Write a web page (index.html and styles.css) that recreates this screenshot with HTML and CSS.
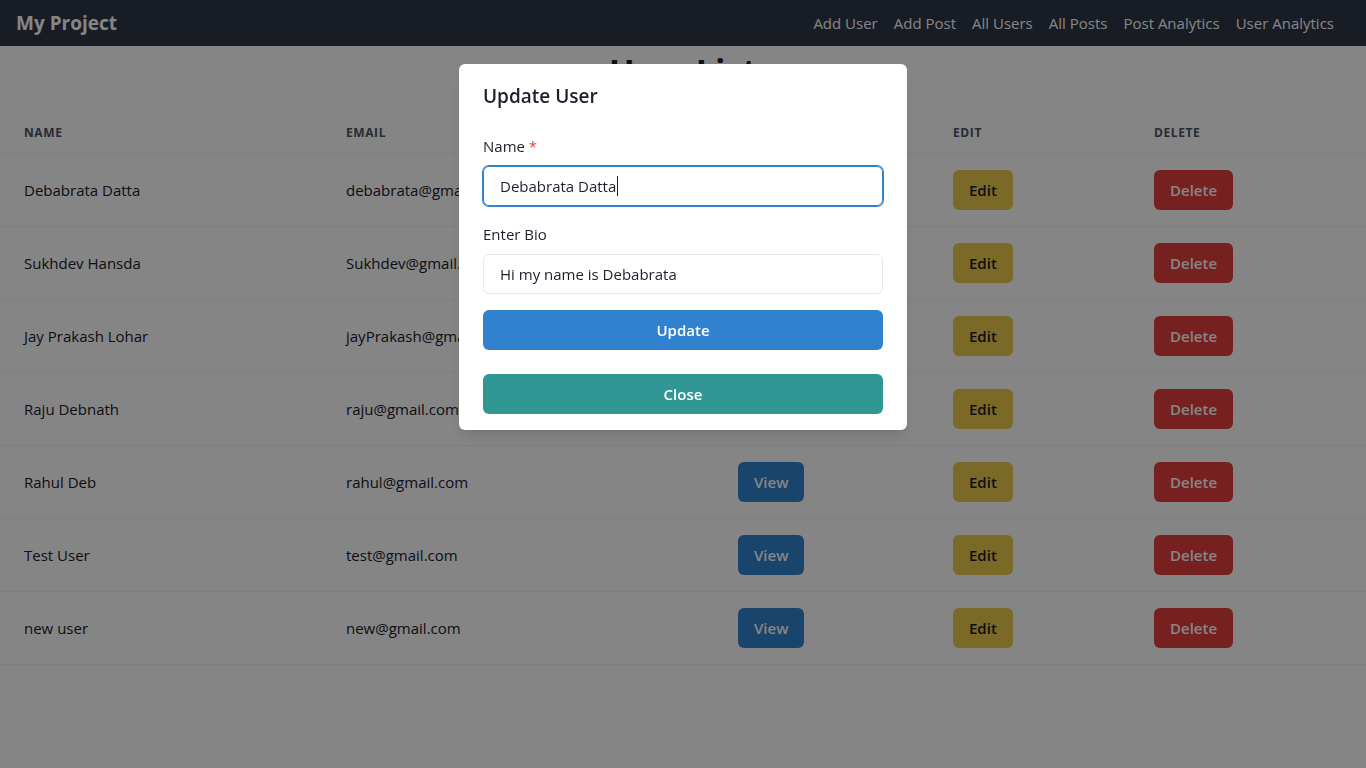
FILE: index.html
```html
<!DOCTYPE html>
<html lang="en">
<head>
<meta charset="utf-8">
<title>My Project</title>
<link rel="stylesheet" href="styles.css">
</head>
<body>
<div class="page">
  <nav class="navbar">
    <div class="brand">My Project</div>
    <div class="links">
      <a href="#">Add User</a>
      <a href="#">Add Post</a>
      <a href="#">All Users</a>
      <a href="#">All Posts</a>
      <a href="#">Post Analytics</a>
      <a href="#">User Analytics</a>
    </div>
  </nav>
  <h1 class="title">User List</h1>
  <table class="users">
    <thead>
      <tr>
        <th class="c-name">Name</th>
        <th class="c-email">Email</th>
        <th class="c-view">View</th>
        <th class="c-edit">Edit</th>
        <th class="c-del">Delete</th>
      </tr>
    </thead>
    <tbody>
      <tr><td>Debabrata Datta</td><td>debabrata@gmail.com</td><td><button class="btn view">View</button></td><td><button class="btn edit">Edit</button></td><td><button class="btn del">Delete</button></td></tr>
      <tr><td>Sukhdev Hansda</td><td>Sukhdev@gmail.com</td><td><button class="btn view">View</button></td><td><button class="btn edit">Edit</button></td><td><button class="btn del">Delete</button></td></tr>
      <tr><td>Jay Prakash Lohar</td><td>jayPrakash@gmail.com</td><td><button class="btn view">View</button></td><td><button class="btn edit">Edit</button></td><td><button class="btn del">Delete</button></td></tr>
      <tr><td>Raju Debnath</td><td>raju@gmail.com</td><td><button class="btn view">View</button></td><td><button class="btn edit">Edit</button></td><td><button class="btn del">Delete</button></td></tr>
      <tr><td>Rahul Deb</td><td>rahul@gmail.com</td><td><button class="btn view">View</button></td><td><button class="btn edit">Edit</button></td><td><button class="btn del">Delete</button></td></tr>
      <tr><td>Test User</td><td>test@gmail.com</td><td><button class="btn view">View</button></td><td><button class="btn edit">Edit</button></td><td><button class="btn del">Delete</button></td></tr>
      <tr><td>new user</td><td>new@gmail.com</td><td><button class="btn view">View</button></td><td><button class="btn edit">Edit</button></td><td><button class="btn del">Delete</button></td></tr>
    </tbody>
  </table>
</div>

<div class="overlay"></div>

<div class="modal-wrap">
  <section class="modal">
    <header class="modal-header">Update User</header>
    <div class="modal-body">
      <label class="label">Name <span class="req">*</span></label>
      <div class="input focused"><span class="val">Debabrata Datta</span><span class="caret"></span></div>
      <label class="label second">Enter Bio</label>
      <div class="input"><span class="val">Hi my name is Debabrata</span></div>
      <button class="mbtn update">Update</button>
    </div>
    <footer class="modal-footer">
      <button class="mbtn close">Close</button>
    </footer>
  </section>
</div>
</body>
</html>
```

FILE: styles.css
```css
* { box-sizing: border-box; }
html, body { margin: 0; padding: 0; }
body {
  font-family: "Open Sans", "Noto Sans", "Liberation Sans", sans-serif;
  color: #1A202C;
  background: #ffffff;
  width: 1366px;
  height: 768px;
  overflow: hidden;
}
.page { position: relative; }

.navbar {
  height: 46px;
  background: #2D3748;
  display: flex;
  align-items: center;
  justify-content: space-between;
  padding: 0 32px 0 16px;
}
.brand {
  color: #ffffff;
  font-weight: 700;
  font-size: 19px;
}
.links { display: flex; gap: 16px; }
.links a {
  color: #ffffff;
  text-decoration: none;
  font-size: 15px;
}

.title {
  margin: 4px 0 21px;
  text-align: center;
  font-size: 34px;
  line-height: 42px;
  font-weight: 700;
}

.users {
  width: 100%;
  border-collapse: collapse;
}
.users th {
  text-align: left;
  text-transform: uppercase;
  font-size: 12px;
  line-height: 16px;
  font-weight: 700;
  letter-spacing: 0.05em;
  color: #4A5568;
  padding: 12px 24px;
  border-bottom: 1px solid #EDF2F7;
}
.users td {
  padding: 16px 24px;
  font-size: 15px;
  line-height: 24px;
  border-bottom: 1px solid #EDF2F7;
}
.c-name { width: 322px; }
.c-email { width: 392px; }
.c-view { width: 215px; }
.c-edit { width: 201px; }

.btn {
  height: 40px;
  padding: 0 16px;
  border: 0;
  border-radius: 6px;
  font-family: inherit;
  font-size: 15px;
  font-weight: 600;
  display: block;
}
.view { background: #3182CE; color: #fff; }
.edit { background: #ECC94B; color: #1A202C; }
.del { background: #E53E3E; color: #fff; }

.overlay {
  position: fixed;
  inset: 0;
  background: rgba(0, 0, 0, 0.48);
}

.modal-wrap {
  position: fixed;
  inset: 0;
  display: flex;
  justify-content: center;
  align-items: flex-start;
  padding-top: 64px;
}
.modal {
  width: 448px;
  background: #fff;
  border-radius: 6px;
  box-shadow: 0 10px 15px -3px rgba(0,0,0,0.1), 0 4px 6px -2px rgba(0,0,0,0.05);
}
.modal-header {
  padding: 17px 24px 15px;
  font-size: 19px;
  line-height: 30px;
  font-weight: 600;
  color: #1A202C;
}
.modal-body {
  padding: 8px 24px 8px;
  display: flex;
  flex-direction: column;
}
.label {
  font-size: 15px;
  line-height: 24px;
  font-weight: 500;
  margin-bottom: 8px;
  color: #1A202C;
}
.label.second { margin-top: 16px; }
.req { color: #E53E3E; }
.input {
  height: 40px;
  border: 1px solid #E2E8F0;
  border-radius: 6px;
  padding: 0 16px;
  display: flex;
  align-items: center;
  font-size: 15px;
  color: #1A202C;
}
.input.focused {
  border-color: #3182CE;
  box-shadow: 0 0 0 1px #3182CE;
}
.caret {
  width: 1px;
  height: 20px;
  background: #1A202C;
  margin-left: 1px;
}
.mbtn {
  height: 40px;
  width: 100%;
  border: 0;
  border-radius: 6px;
  font-family: inherit;
  font-size: 15px;
  font-weight: 600;
  color: #fff;
}
.update { background: #3182CE; margin-top: 16px; }
.close { background: #319795; }
.modal-footer { padding: 16px 24px; }
```
